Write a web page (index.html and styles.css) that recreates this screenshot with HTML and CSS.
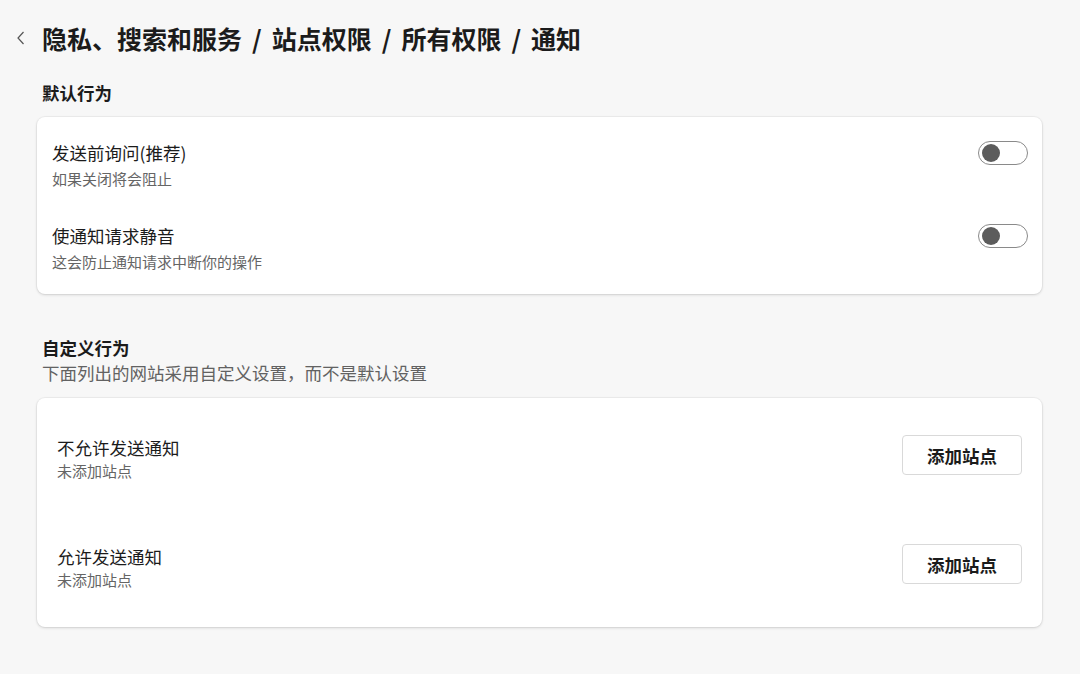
FILE: index.html
```html
<!DOCTYPE html>
<html lang="zh-CN">
<head>
<meta charset="utf-8">
<title>通知</title>
<link rel="stylesheet" href="styles.css">
</head>
<body>
<div class="page">
  <header class="crumbs">
    <button class="back" aria-label="返回">
      <svg width="10" height="16" viewBox="0 0 10 16"><path d="M7.5 2 L2 8 L7.5 14" fill="none" stroke="#555" stroke-width="1.2"/></svg>
    </button>
    <h1 class="title">隐私、搜索和服务<span class="sep">/</span>站点权限<span class="sep">/</span>所有权限<span class="sep">/</span>通知</h1>
  </header>

  <section class="section">
    <h2 class="section-title">默认行为</h2>
    <div class="card card-default">
      <div class="row">
        <div class="text">
          <div class="row-title">发送前询问(推荐)</div>
          <div class="row-sub">如果关闭将会阻止</div>
        </div>
        <span class="toggle"><span class="knob"></span></span>
      </div>
      <div class="row">
        <div class="text">
          <div class="row-title">使通知请求静音</div>
          <div class="row-sub">这会防止通知请求中断你的操作</div>
        </div>
        <span class="toggle"><span class="knob"></span></span>
      </div>
    </div>
  </section>

  <section class="section custom">
    <h2 class="section-title">自定义行为</h2>
    <p class="section-desc">下面列出的网站采用自定义设置，而不是默认设置</p>
    <div class="card card-custom">
      <div class="site-row">
        <div class="text">
          <div class="row-title">不允许发送通知</div>
          <div class="row-sub">未添加站点</div>
        </div>
        <button class="add-btn">添加站点</button>
      </div>
      <div class="site-row">
        <div class="text">
          <div class="row-title">允许发送通知</div>
          <div class="row-sub">未添加站点</div>
        </div>
        <button class="add-btn">添加站点</button>
      </div>
    </div>
  </section>
</div>
</body>
</html>
```

FILE: styles.css
```css
* { box-sizing: border-box; }
html, body { margin: 0; padding: 0; }
body {
  background: #f7f7f7;
  font-family: "Noto Sans CJK SC", "Noto Sans", sans-serif;
  color: #1b1b1b;
  width: 1080px;
  height: 674px;
  overflow: hidden;
}
.page {
  padding: 20px 38px 0 37px;
}
.crumbs {
  display: flex;
  align-items: center;
  margin-left: -21px;
  height: 36px;
}
.back {
  border: 0;
  background: transparent;
  padding: 0;
  width: 14px;
  height: 16px;
  margin: 0 12px 0 0;
  display: flex;
  align-items: center;
  justify-content: flex-start;
}
.title {
  margin: 0;
  font-size: 25px;
  font-weight: 700;
  line-height: 36px;
  color: #1b1b1b;
}
.sep {
  display: inline-block;
  margin: 0 10px;
  font-weight: 700;
}
.section-title {
  margin: 0 0 0 5px;
  font-size: 17.5px;
  font-weight: 700;
  line-height: 24px;
}
.section {
  margin-top: 25px;
}
.section .section-title + .card { margin-top: 12px; }
.custom { margin-top: 42px; }
.section-desc {
  margin: 1px 0 0 5px;
  font-size: 17.5px;
  line-height: 24px;
  color: #626262;
}
.custom .section-desc + .card { margin-top: 13px; }
.card {
  background: #fff;
  border-radius: 8px;
  box-shadow: 0 0 0 1px rgba(0,0,0,0.035), 0 1px 3px rgba(0,0,0,0.14);
}
.card-default {
  padding: 24px 14px 22px 15px;
  display: flex;
  flex-direction: column;
  gap: 35px;
}
.row {
  display: flex;
  justify-content: space-between;
  align-items: flex-start;
}
.row-title {
  font-size: 17.5px;
  line-height: 24px;
  color: #1b1b1b;
}
.row-sub {
  font-size: 15px;
  line-height: 20px;
  margin-top: 4px;
  color: #656565;
}
.toggle {
  width: 50px;
  height: 24px;
  border: 1px solid #8a8a8a;
  border-radius: 12px;
  display: flex;
  align-items: center;
  padding-left: 3px;
}
.knob {
  width: 18px;
  height: 18px;
  border-radius: 50%;
  background: #5c5c5c;
}
.card-custom {
  padding: 38px 20px 37px 20px;
  display: flex;
  flex-direction: column;
  gap: 64px;
}
.site-row {
  display: flex;
  justify-content: space-between;
  align-items: flex-start;
}
.site-row .row-sub { margin-top: 1px; }
.add-btn {
  width: 120px;
  height: 40px;
  margin-top: -1px;
  background: #fff;
  border: 1px solid #d9d9d9;
  border-radius: 4px;
  font-family: "Noto Sans CJK SC", "Noto Sans", sans-serif;
  font-size: 17.5px;
  font-weight: 700;
  color: #1b1b1b;
  padding: 0;
}
```
